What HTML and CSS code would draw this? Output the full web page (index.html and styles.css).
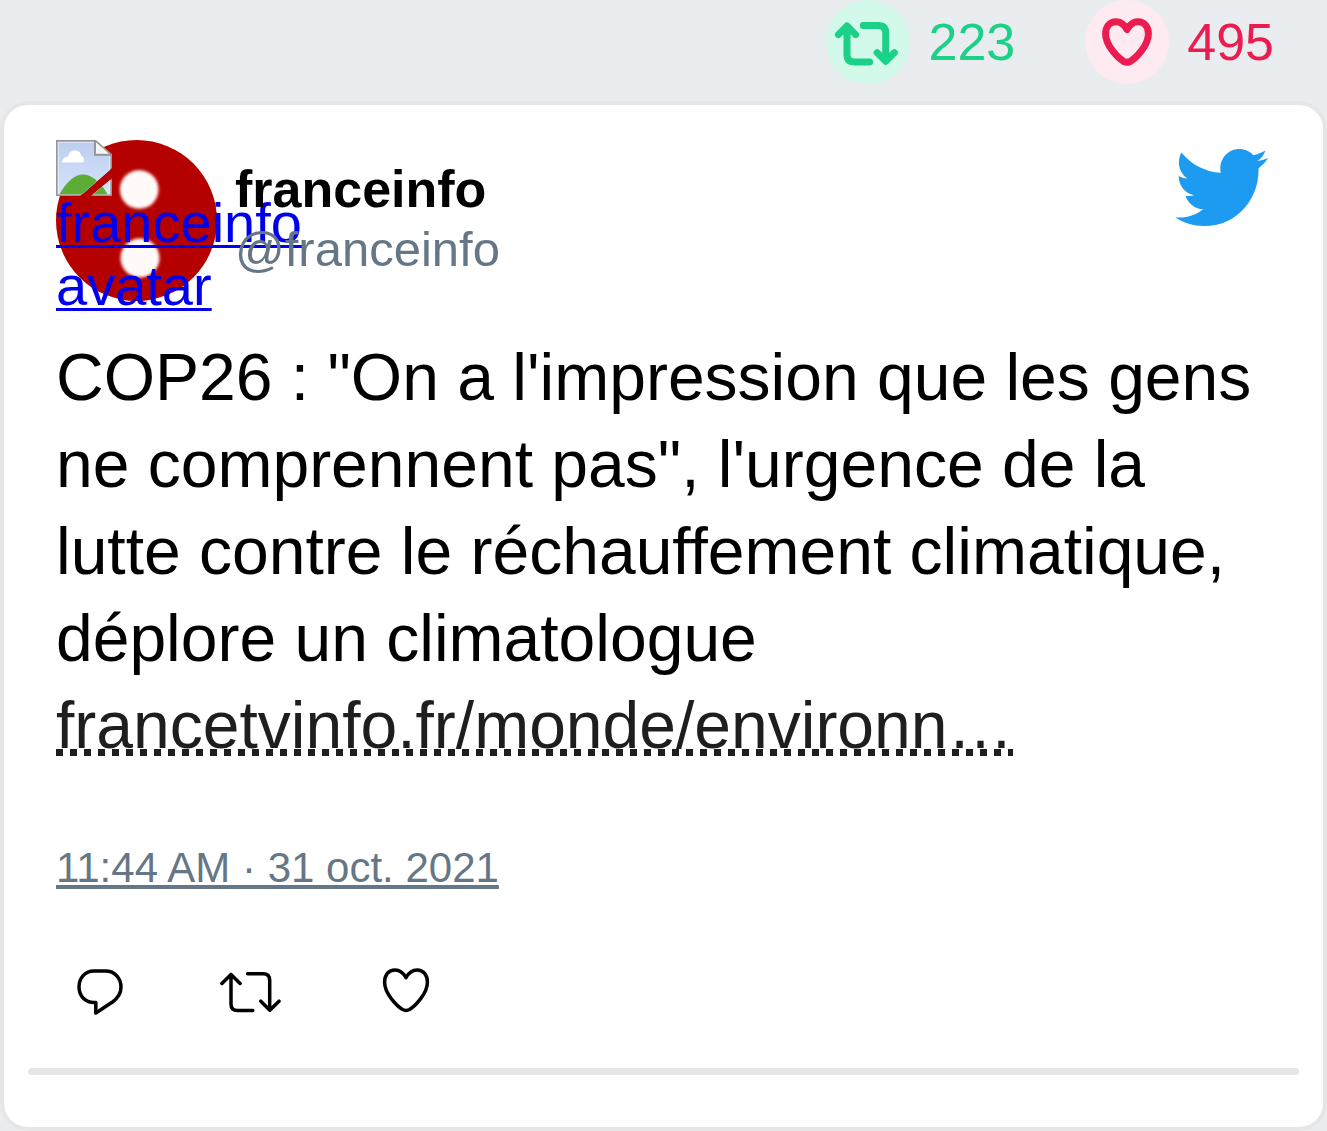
FILE: index.html
```html
<!DOCTYPE html>
<html lang="fr">
<head>
<meta charset="utf-8">
<meta name="viewport" content="width=device-width, initial-scale=1">
<title>franceinfo</title>
<link rel="stylesheet" href="styles.css">
</head>
<body>
<header class="stats">
  <div class="stat stat-retweets">
    <span class="stat-badge">
      <svg width="84" height="84" viewBox="826 0 84 84" aria-hidden="true"><path d="M838.4 34.6 847 26l8.6 8.6M847 27V54.5Q847 62 854.500 62H869.600M863.300 25.400H878.200Q885.700 25.400 885.700 33V61M877.100 52.600 885.700 61.200 894.300 52.600"/></svg>
    </span>
    <span>223</span>
  </div>
  <div class="stat stat-likes">
    <span class="stat-badge">
      <svg width="84" height="84" viewBox="-42 -29.500 84 84" aria-hidden="true"><path d="M0 0C-3-5.500-7-7.700-11-7.700-17.500-7.700-21.400-2.500-21.400 4.500-21.400 16-9 28.500-3.500 31.800-1 33.100 1 33.100 3.500 31.800 9 28.500 21.400 16 21.400 4.500 21.400-2.500 17.500-7.700 11-7.700 7-7.700 3-5.500 0 0Z"/></svg>
    </span>
    <span>495</span>
  </div>
</header>
<main class="card">
  <div class="author">
    <a class="avatar" href="#profile">
      <svg class="avatar-picture" width="161" height="161" viewBox="0 0 161 161" aria-hidden="true">
        <defs><filter id="soft"><feGaussianBlur stdDeviation="1.400"/></filter></defs>
        <circle cx="80.500" cy="80.500" r="80.500" fill="#b50000"/>
        <g fill="#fffaf7" filter="url(#soft)"><circle cx="83.200" cy="49.500" r="19.300"/><circle cx="84" cy="118" r="19.500"/></g>
      </svg>
      <svg class="avatar-missing" width="56" height="56" viewBox="0 0 56 56" aria-hidden="true">
        <defs>
          <linearGradient id="sky" x1="0" y1="0" x2="0" y2="1"><stop offset="0" stop-color="#bdcef0"/><stop offset="1" stop-color="#d5e3fa"/></linearGradient>
          <clipPath id="torn"><path d="M0 0H40L56 14V28L24 56H0ZM35 56 56 38.500V56Z"/></clipPath>
        </defs>
        <g clip-path="url(#torn)">
          <path d="M0 0H40L56 14V56H0Z" fill="#979797"/>
          <path d="M1.700 1.700H38V15.700H54.300V54.300H1.700Z" fill="#f4f7fd"/>
          <path d="M2.500 2.500H38V15.700H53.500V54.300H2.500Z" fill="url(#sky)"/>
          <path d="M6 22.500C6 18.500 9 17 12 16.500 13 12 16 10.500 19 10.500 23 10.500 25 13.500 25.300 16 28 17 28.500 20 27.500 22.500Z" fill="#fff"/>
          <path d="M3.500 54.300C10 42 19 34.500 27 34.500S45 42 51.500 54.300Z" fill="#5bad36"/>
          <path d="M38 0V15.700H56V14L40 0Z" fill="#979797"/>
          <path d="M40 2.200V13.700H53Z" fill="#f7f7f7"/>
        </g>
      </svg>
      <span class="avatar-label">franceinfo avatar</span>
    </a>
    <div class="names">
      <div class="name">franceinfo</div>
      <div class="handle">@franceinfo</div>
    </div>
    <svg class="bird" width="93" height="77" viewBox="0.937 2.752 22.706 18.460" preserveAspectRatio="none" role="img" aria-label="Twitter"><path fill="#1d9bf0" d="M23.643 4.937c-.835.37-1.732.62-2.675.733.962-.576 1.7-1.49 2.048-2.578-.9.534-1.897.922-2.958 1.13-.85-.904-2.06-1.47-3.4-1.47-2.572 0-4.658 2.086-4.658 4.66 0 .364.042.718.12 1.06-3.873-.195-7.304-2.05-9.602-4.868-.4.69-.63 1.49-.63 2.342 0 1.616.823 3.043 2.072 3.878-.764-.025-1.482-.234-2.11-.583v.06c0 2.257 1.605 4.14 3.737 4.568-.392.106-.803.162-1.227.162-.3 0-.593-.028-.877-.082.593 1.85 2.313 3.198 4.352 3.234-1.595 1.25-3.604 1.995-5.786 1.995-.376 0-.747-.022-1.112-.065 2.062 1.323 4.51 2.093 7.14 2.093 8.57 0 13.255-7.098 13.255-13.254 0-.2-.005-.402-.014-.602.91-.658 1.7-1.477 2.323-2.41z"/></svg>
  </div>
  <p class="message">COP26 : "On a l'impression que les gens ne comprennent pas", l'urgence de la lutte contre le réchauffement climatique, déplore un climatologue <a class="message-link" href="#article">francetvinfo.fr/monde/environn…</a></p>
  <a class="date" href="#status">11:44 AM · 31 oct. 2021</a>
  <div class="actions">
    <button class="action" type="button" aria-label="Répondre"><svg width="72" height="56" viewBox="64 964 72 56"><path stroke-width="3.500" d="M94 971H105.500C115 971 121 978.500 121 987 121 993.500 118 998 112.500 1002L95.800 1013V1002.500H94C85 1002.500 79 995.500 79 987 79 978 85 971 94 971Z"/></svg></button>
    <button class="action" type="button" aria-label="Retweeter"><svg width="72" height="56" viewBox="217 964 72 56"><path stroke-width="3.500" d="M221.900 983.500 231 974.400 240.100 983.500M231 975V1004Q231 1010.600 237.600 1010.600H252.800M247.600 973.800H263.200Q269.700 973.800 269.700 980.500V1010M260.800 1001.200 269.800 1010.200 279 1001.200"/></svg></button>
    <button class="action" type="button" aria-label="J'aime"><svg width="72" height="56" viewBox="-36 -13.700 72 56"><path stroke-width="3.500" d="M0 0C-3-5.500-7-7.700-11-7.700-17.500-7.700-21.400-2.500-21.400 4.500-21.400 16-9 28.500-3.500 31.800-1 33.100 1 33.100 3.500 31.800 9 28.500 21.400 16 21.400 4.500 21.400-2.500 17.500-7.700 11-7.700 7-7.700 3-5.500 0 0Z"/></svg></button>
  </div>
  <hr class="divider">
</main>
</body>
</html>
```
FILE: styles.css
```css
* {
  box-sizing: border-box;
}

body {
  margin: 0;
  background: #e9edf0;
  color: #000;
  font-family: "Liberation Sans", Arial, sans-serif;
}

svg {
  display: block;
  flex: none;
}

.stats {
  display: flex;
  justify-content: flex-end;
  gap: 70px;
  padding: 0 53px 17px 0;
}

.stat {
  display: flex;
  gap: 18px;
  font-size: 52px;
  line-height: 84px;
}

.stat-badge {
  border-radius: 50%;
}

.stat-badge path {
  fill: none;
  stroke: currentColor;
  stroke-width: 7;
  stroke-linecap: round;
  stroke-linejoin: round;
}

.stat-retweets {
  color: #1bd187;
}

.stat-retweets .stat-badge {
  background: #d3f9ea;
}

.stat-likes {
  color: #ea1c50;
}

.stat-likes .stat-badge {
  background: #fdebf1;
}

.card {
  padding: 35px 52px 52px;
  background: #fff;
  border: 4px solid #e6e6e6;
  border-radius: 28px;
}

.author {
  display: flex;
  align-items: flex-start;
  gap: 18px;
}

.avatar {
  display: grid;
  flex: none;
  width: 161px;
  height: 161px;
  color: #00e;
}

.avatar > * {
  grid-area: 1 / 1;
}

.avatar-label {
  padding-top: 51px;
  font-size: 56px;
  line-height: 63px;
  text-decoration: underline;
  text-decoration-thickness: 3px;
  text-underline-offset: 3px;
  text-decoration-skip-ink: none;
}

.avatar {
  text-decoration: none;
}

.names {
  flex: 1;
  padding-top: 19px;
  line-height: 60px;
}

.name {
  font-size: 52px;
  font-weight: 700;
}

.handle {
  color: #657786;
  font-size: 49px;
}

.bird {
  margin: 9px 3px 0 0;
}

.message {
  margin: 33px 0 75px;
  font-size: 66px;
  line-height: 87px;
}

.message-link {
  color: #1e1e1e;
  text-decoration: none;
  background: repeating-linear-gradient(90deg, #1e1e1e 0 7px, transparent 7px 14px) 0 61px / 100% 7px no-repeat;
}

.date {
  display: block;
  width: fit-content;
  color: #657786;
  font-size: 42px;
  line-height: 48px;
  text-decoration-thickness: 4px;
  text-underline-offset: 3px;
}

.actions {
  display: flex;
  gap: 81px;
  padding: 72px 8px 48px;
}

.action {
  padding: 0;
  border: 0;
  background: none;
  color: inherit;
}

.action path {
  fill: none;
  stroke: currentColor;
  stroke-linecap: round;
  stroke-linejoin: round;
}

.divider {
  height: 7px;
  margin: 0 -28px;
  border: 0;
  border-radius: 4px;
  background: #e6e6e6;
}
```
